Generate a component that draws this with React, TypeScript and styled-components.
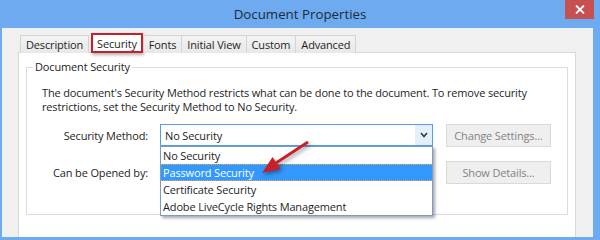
import * as React from 'react'
import styled, { createGlobalStyle } from 'styled-components'

const uiFont = `'Open Sans', 'Noto Sans', 'DejaVu Sans', sans-serif`
const textSize = '11px'

const GlobalStyle = createGlobalStyle`
    html, body {
        margin: 0;
        padding: 0;
    }
    body {
        width: 600px;
        height: 240px;
        overflow: hidden;
        background: #6eaaf0;
    }
`

const Window = styled.div`
    width: 600px;
    height: 240px;
    display: flex;
    flex-direction: column;
    background: #6eaaf0;
    font-family: ${uiFont};
    letter-spacing: -0.15px;
    color: #1e1e1e;
    overflow: hidden;
`

const TitleBar = styled.div`
    position: relative;
    flex: none;
    height: 28px;
    display: flex;
    align-items: center;
    justify-content: center;
    font-size: 13.3px;
    letter-spacing: 0;
    color: #1c2a3a;
`

const CloseButton = styled.div`
    position: absolute;
    top: 0;
    right: 6px;
    width: 29px;
    height: 19px;
    background: #c75050;
    display: flex;
    align-items: center;
    justify-content: center;
`

const Body = styled.div`
    flex: 1;
    min-height: 0;
    margin: 0 7px 3px 2px;
    padding: 5px 17px 0 16px;
    background: #f0f0f0;
    display: flex;
    flex-direction: column;
    overflow: hidden;
`

const TabStrip = styled.div`
    position: relative;
    z-index: 1;
    display: flex;
    align-items: flex-end;
    height: 20px;
    padding-left: 2px;
    margin-bottom: -1px;
`

const Tab = styled.div<{ $active?: boolean }>`
    box-sizing: border-box;
    height: ${(p) => (p.$active ? '20px' : '18px')};
    padding: 0 ${(p) => (p.$active ? '4px' : '5px')};
    margin: 0 ${(p) => (p.$active ? '1px' : '0')} 0 ${(p) => (p.$active ? '2px' : '-1px')};
    display: flex;
    align-items: center;
    font-size: ${textSize};
    white-space: nowrap;
    background: ${(p) => (p.$active ? '#ffffff' : 'linear-gradient(#f3f3f3, #e8e8e8)')};
    border: ${(p) => (p.$active ? '2px solid #c8202a' : '1px solid #d4d4d4')};
    border-bottom: ${(p) => (p.$active ? '2px solid #c8202a' : 'none')};
    box-shadow: ${(p) => (p.$active ? '1px 2px 3px rgba(0, 0, 0, 0.3)' : 'none')};
    &:first-child {
        margin-left: 0;
    }
`

const Panel = styled.div`
    flex: 1;
    background: #ffffff;
    border: 1px solid #d9d9d9;
    border-bottom: none;
    padding: 7px 7px 0 7px;
`

const GroupBox = styled.fieldset`
    margin: 0;
    padding: 0 15px 30px 15px;
    border: 1px solid #dcdcdc;
    min-width: 0;
`

const Legend = styled.legend`
    margin-left: -9px;
    padding: 0 2px;
    font-size: ${textSize};
    line-height: 14px;
`

const Description = styled.p`
    margin: 12px 0 0 0;
    font-size: ${textSize};
    line-height: 14px;
    white-space: nowrap;
`

const FormGrid = styled.div`
    display: grid;
    grid-template-columns: 106px 273px 106px;
    grid-auto-rows: 23px;
    column-gap: 12px;
    row-gap: 14px;
    margin-top: 10px;
`

const FieldLabel = styled.div`
    align-self: center;
    justify-self: end;
    font-size: ${textSize};
    white-space: nowrap;
`

const ComboWrap = styled.div`
    position: relative;
    z-index: 2;
`

const Combo = styled.div`
    box-sizing: border-box;
    height: 22px;
    display: flex;
    background: #ffffff;
    border: 1px solid #569de5;
`

const ComboValue = styled.div`
    flex: 1;
    display: flex;
    align-items: center;
    padding-left: 4px;
    font-size: ${textSize};
`

const ComboArrow = styled.div`
    width: 17px;
    background: #e3effb;
    display: flex;
    align-items: center;
    justify-content: center;
`

const DropList = styled.div`
    position: absolute;
    top: 22px;
    left: 0;
    box-sizing: border-box;
    width: 273px;
    background: #ffffff;
    border: 1px solid #7c9cc6;
    box-shadow: 2px 2px 3px rgba(0, 0, 0, 0.35);
`

const ListItem = styled.div<{ $selected?: boolean }>`
    box-sizing: border-box;
    height: 17px;
    padding-left: 2px;
    display: flex;
    align-items: center;
    font-size: ${textSize};
    white-space: nowrap;
    color: ${(p) => (p.$selected ? '#ffffff' : '#1e1e1e')};
    background: ${(p) => (p.$selected ? '#3399ff' : 'transparent')};
    border-top: 1px dotted ${(p) => (p.$selected ? '#f2a93b' : 'transparent')};
    border-bottom: 1px dotted ${(p) => (p.$selected ? '#f2a93b' : 'transparent')};
`

const Pointer = styled.svg`
    position: absolute;
    left: 95px;
    top: 10px;
    width: 60px;
    height: 45px;
    z-index: 3;
    overflow: visible;
    filter: drop-shadow(2px 2px 2px rgba(0, 0, 0, 0.4));
`

const ActionButton = styled.div`
    box-sizing: border-box;
    margin-left: 1px;
    height: 23px;
    display: flex;
    align-items: center;
    justify-content: center;
    font-size: ${textSize};
    color: #838383;
    background: #efefef;
    border: 1px solid #d9d9d9;
    white-space: nowrap;
`

const tabs = ['Description', 'Security', 'Fonts', 'Initial View', 'Custom', 'Advanced']

const methods = [
    'No Security',
    'Password Security',
    'Certificate Security',
    'Adobe LiveCycle Rights Management',
]

const App = () => (
    <Window>
        <GlobalStyle />
        <TitleBar>
            Document Properties
            <CloseButton>
                <svg width="10" height="9" viewBox="0 0 10 9">
                    <path d="M1 0.5 L9 8.5 M9 0.5 L1 8.5" stroke="#ffffff" strokeWidth="1.8" />
                </svg>
            </CloseButton>
        </TitleBar>
        <Body>
            <TabStrip>
                {tabs.map((t) => (
                    <Tab key={t} $active={t === 'Security'}>
                        {t}
                    </Tab>
                ))}
            </TabStrip>
            <Panel>
                <GroupBox>
                    <Legend>Document Security</Legend>
                    <Description>
                        The document's Security Method restricts what can be done to the document. To remove security
                        <br />
                        restrictions, set the Security Method to No Security.
                    </Description>
                    <FormGrid>
                        <FieldLabel>Security Method:</FieldLabel>
                        <ComboWrap>
                            <Combo>
                                <ComboValue>No Security</ComboValue>
                                <ComboArrow>
                                    <svg width="8" height="6" viewBox="0 0 8 6">
                                        <path d="M1 1 L4 4.5 L7 1" fill="none" stroke="#3a3a3a" strokeWidth="1.6" />
                                    </svg>
                                </ComboArrow>
                            </Combo>
                            <DropList>
                                {methods.map((m) => (
                                    <ListItem key={m} $selected={m === 'Password Security'}>
                                        {m}
                                    </ListItem>
                                ))}
                            </DropList>
                            <Pointer viewBox="0 0 60 45">
                                <line x1="53" y1="8" x2="21" y2="29" stroke="#c8202a" strokeWidth="2.8" />
                                <polygon points="7,39 25.5,35 17.5,23" fill="#c8202a" />
                            </Pointer>
                        </ComboWrap>
                        <ActionButton>Change Settings...</ActionButton>
                        <FieldLabel>Can be Opened by:</FieldLabel>
                        <div />
                        <ActionButton>Show Details...</ActionButton>
                    </FormGrid>
                </GroupBox>
            </Panel>
        </Body>
    </Window>
)

export default App
